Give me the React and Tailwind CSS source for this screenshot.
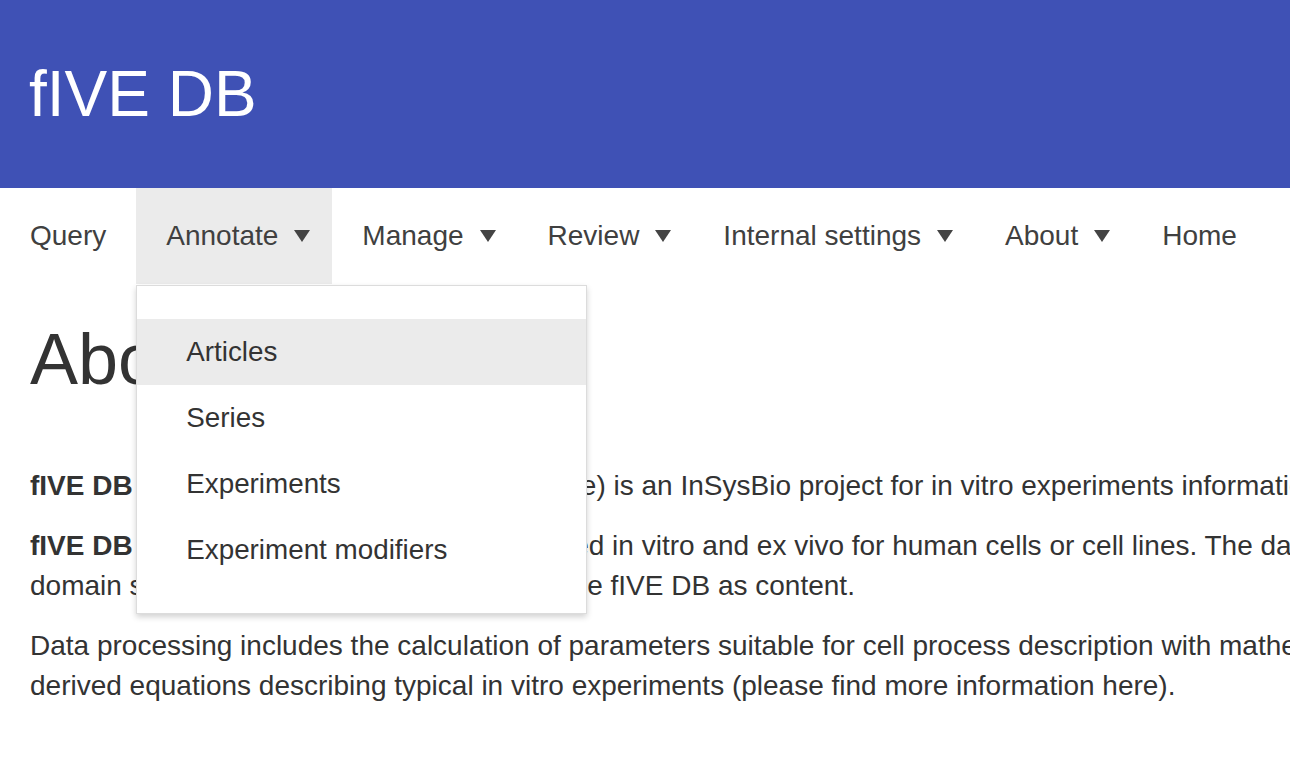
import React from "react";

const navItems = [
  { label: "Query" },
  { label: "Annotate", menu: true, open: true },
  { label: "Manage", menu: true },
  { label: "Review", menu: true },
  { label: "Internal settings", menu: true },
  { label: "About", menu: true },
  { label: "Home" },
];

const annotateLinks = ["Articles", "Series", "Experiments", "Experiment modifiers"];

const Caret = () => (
  <span className="ml-[16px] inline-block h-0 w-0 border-x-[8px] border-t-[12px] border-x-transparent border-t-[#444]" />
);

const DropdownMenu = () => (
  <div className="absolute left-0 top-[97px] z-10 w-[451px] border border-[#dcdcdc] bg-white pt-[33px] pb-[30px] shadow-[0_3px_6px_rgba(0,0,0,0.18)]">
    {annotateLinks.map((link, i) => (
      <div
        key={link}
        className={`h-[66px] pl-[49px] leading-[66px] text-[27.8px] text-[#333] ${
          i === 0 ? "bg-[#ebebeb]" : ""
        }`}
      >
        {link}
      </div>
    ))}
  </div>
);

const App = () => {
  return (
    <div className="w-[1290px] h-[762px] overflow-hidden bg-white font-['Liberation_Sans',Arial,sans-serif] text-[#333]">
      <header className="flex h-[188px] items-center bg-[#3f51b5] pl-[29px]">
        <h1 className="text-[64px] leading-none text-white">fIVE DB</h1>
      </header>

      <nav className="flex h-[96px] items-stretch">
        {navItems.map((item) => (
          <div
            key={item.label}
            className={`relative flex items-center pl-[30px] text-[28px] text-[#404040] whitespace-nowrap ${
              item.menu ? "pr-[22px]" : "pr-[30px]"
            } ${item.open ? "bg-[#ebebeb]" : ""}`}
          >
            <span>{item.label}</span>
            {item.menu && <Caret />}
            {item.open && <DropdownMenu />}
          </div>
        ))}
      </nav>

      <main className="px-[30px]">
        <h2 className="mt-[36px] mb-[67px] text-[72px] leading-[1.1]">About</h2>
        <div className="whitespace-nowrap text-[28px] leading-[40px]">
          <p className="mb-[20px]">
            <b>fIVE DB</b> (fIVE: in vItro Experiments DataBase) is an InSysBio project for in vitro experiments information collection and processing.
          </p>
          <p className="mb-[20px]">
            <b>fIVE DB</b> contains data on experiments studied in vitro and ex vivo for human cells or cell lines. The data are collected from the
            <br />
            domain specific literature and presented in the fIVE DB as content.
          </p>
          <p>
            Data processing includes the calculation of parameters suitable for cell process description with mathematical models by using
            <br />
            derived equations describing typical in vitro experiments (please find more information here).
          </p>
        </div>
      </main>
    </div>
  );
};

export default App;
